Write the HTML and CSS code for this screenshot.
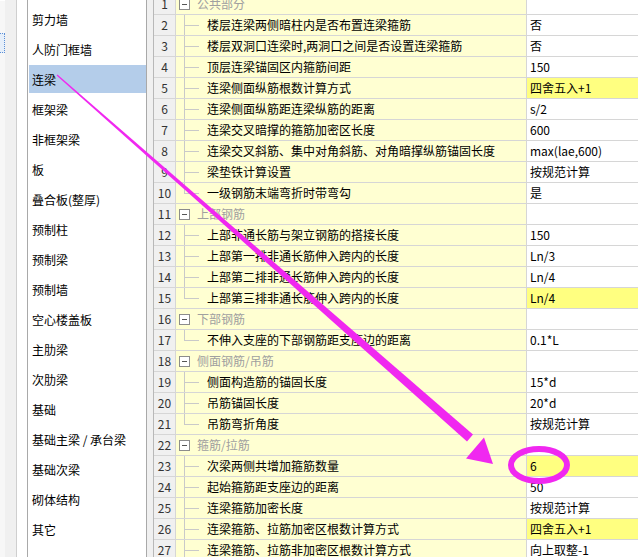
FILE: index.html
```html
<!DOCTYPE html>
<html lang="zh-CN">
<head>
<meta charset="utf-8">
<title>连梁</title>
<link rel="stylesheet" href="styles.css">
</head>
<body>
<div class="app">
  <div class="edge"><div class="edge-sel"></div></div>
  <div class="rail"></div>
  <div class="pad"></div>
  <nav class="sidebar">
    <div class="item">剪力墙</div>
    <div class="item">人防门框墙</div>
    <div class="item sel">连梁</div>
    <div class="item">框架梁</div>
    <div class="item">非框架梁</div>
    <div class="item">板</div>
    <div class="item">叠合板(整厚)</div>
    <div class="item">预制柱</div>
    <div class="item">预制梁</div>
    <div class="item">预制墙</div>
    <div class="item">空心楼盖板</div>
    <div class="item">主肋梁</div>
    <div class="item">次肋梁</div>
    <div class="item">基础</div>
    <div class="item">基础主梁 / 承台梁</div>
    <div class="item">基础次梁</div>
    <div class="item">砌体结构</div>
    <div class="item">其它</div>
  </nav>
  <div class="split"></div>
  <div class="grid">
    <div class="row"><div class="num">1</div><div class="name group"><span class="box"></span>公共部分</div><div class="val"></div></div>
    <div class="row"><div class="num">2</div><div class="name child">楼层连梁两侧暗柱内是否布置连梁箍筋</div><div class="val">否</div></div>
    <div class="row"><div class="num">3</div><div class="name child">楼层双洞口连梁时,两洞口之间是否设置连梁箍筋</div><div class="val">否</div></div>
    <div class="row"><div class="num">4</div><div class="name child">顶层连梁锚固区内箍筋间距</div><div class="val">150</div></div>
    <div class="row"><div class="num">5</div><div class="name child">连梁侧面纵筋根数计算方式</div><div class="val hl">四舍五入+1</div></div>
    <div class="row"><div class="num">6</div><div class="name child">连梁侧面纵筋距连梁纵筋的距离</div><div class="val">s/2</div></div>
    <div class="row"><div class="num">7</div><div class="name child">连梁交叉暗撑的箍筋加密区长度</div><div class="val">600</div></div>
    <div class="row"><div class="num">8</div><div class="name child">连梁交叉斜筋、集中对角斜筋、对角暗撑纵筋锚固长度</div><div class="val">max(lae,600)</div></div>
    <div class="row"><div class="num">9</div><div class="name child">梁垫铁计算设置</div><div class="val">按规范计算</div></div>
    <div class="row"><div class="num">10</div><div class="name child last">一级钢筋末端弯折时带弯勾</div><div class="val">是</div></div>
    <div class="row"><div class="num">11</div><div class="name group"><span class="box"></span>上部钢筋</div><div class="val"></div></div>
    <div class="row"><div class="num">12</div><div class="name child">上部非通长筋与架立钢筋的搭接长度</div><div class="val">150</div></div>
    <div class="row"><div class="num">13</div><div class="name child">上部第一排非通长筋伸入跨内的长度</div><div class="val">Ln/3</div></div>
    <div class="row"><div class="num">14</div><div class="name child">上部第二排非通长筋伸入跨内的长度</div><div class="val">Ln/4</div></div>
    <div class="row"><div class="num">15</div><div class="name child last">上部第三排非通长筋伸入跨内的长度</div><div class="val hl">Ln/4</div></div>
    <div class="row"><div class="num">16</div><div class="name group"><span class="box"></span>下部钢筋</div><div class="val"></div></div>
    <div class="row"><div class="num">17</div><div class="name child last">不伸入支座的下部钢筋距支座边的距离</div><div class="val">0.1*L</div></div>
    <div class="row"><div class="num">18</div><div class="name group"><span class="box"></span>侧面钢筋/吊筋</div><div class="val"></div></div>
    <div class="row"><div class="num">19</div><div class="name child">侧面构造筋的锚固长度</div><div class="val">15*d</div></div>
    <div class="row"><div class="num">20</div><div class="name child">吊筋锚固长度</div><div class="val">20*d</div></div>
    <div class="row"><div class="num">21</div><div class="name child last">吊筋弯折角度</div><div class="val">按规范计算</div></div>
    <div class="row"><div class="num">22</div><div class="name group"><span class="box"></span>箍筋/拉筋</div><div class="val"></div></div>
    <div class="row"><div class="num">23</div><div class="name child">次梁两侧共增加箍筋数量</div><div class="val hl">6</div></div>
    <div class="row"><div class="num">24</div><div class="name child">起始箍筋距支座边的距离</div><div class="val">50</div></div>
    <div class="row"><div class="num">25</div><div class="name child">连梁箍筋加密长度</div><div class="val">按规范计算</div></div>
    <div class="row"><div class="num">26</div><div class="name child">连梁箍筋、拉筋加密区根数计算方式</div><div class="val hl">四舍五入+1</div></div>
    <div class="row"><div class="num">27</div><div class="name child">连梁箍筋、拉筋非加密区根数计算方式</div><div class="val">向上取整-1</div></div>
  </div>
</div>
<svg class="overlay" width="638" height="557" viewBox="0 0 638 557">
  <polygon class="mark" points="56.6,75.4 57.4,74.6 473,434.6 467,441.4"/>
  <polygon class="mark" points="493,464 466,458.5 484,437.5"/>
  <ellipse class="ring" cx="539" cy="465" rx="28" ry="16"/>
</svg>
</body>
</html>
```

FILE: styles.css
```css
* { box-sizing: border-box; }
body {
  margin: 0;
  width: 638px;
  height: 557px;
  overflow: hidden;
  position: relative;
  background: #fff;
  font-family: "Noto Sans CJK SC", "Microsoft YaHei", sans-serif;
  font-size: 12px;
  color: #000;
}
.app {
  display: flex;
  height: 557px;
}
.edge {
  width: 5px;
  background: #f7f7f7;
  border-top: 1px solid #fff;
  padding-top: 32px;
}
.edge-sel {
  height: 20px;
  border: 1px dotted #5b8fd6;
  border-left: none;
  background: #e6effa;
}
.rail {
  width: 12px;
  background: #f0f0f0;
  border-right: 1px solid #cfcfcf;
}
.pad {
  width: 10px;
  background: #fff;
}
.sidebar {
  width: 120px;
  border-left: 1px solid #a9a9a9;
  border-right: 1px solid #a9a9a9;
  padding-top: 5px;
  background: #fff;
}
.item {
  height: 30px;
  line-height: 30px;
  padding-left: 3px;
  margin-left: 1px;
  white-space: nowrap;
}
.item.sel {
  background: linear-gradient(#b4cdea, #b4cdea) no-repeat 0 0 / 100% 28px;
}
.split {
  width: 7px;
  background: #f0f0f0;
  border-right: 1px solid #b8b8b8;
}
.grid {
  flex: 1;
  margin-top: -6px;
}
.row {
  display: grid;
  grid-template-columns: 22px 351px 1fr;
  height: 21px;
  border-bottom: 1px solid #d6d6d6;
}
.num {
  background: #f0f0f0;
  border-right: 1px solid #d6d6d6;
  text-align: center;
  line-height: 20px;
  color: #333;
  font-size: 12px;
}
.name {
  position: relative;
  background: #ffffd2;
  border-right: 1px solid #d6d6d6;
  line-height: 20px;
  white-space: nowrap;
  overflow: hidden;
}
.name.child { padding-left: 31px; }
.name.child::before {
  content: "";
  position: absolute;
  left: 8px;
  top: 0;
  height: 20px;
  border-left: 1px solid #c9c9c9;
}
.name.child::after {
  content: "";
  position: absolute;
  left: 8px;
  top: 10px;
  width: 15px;
  border-top: 1px solid #c9c9c9;
}
.name.last::before { height: 11px; }
.name.group {
  padding-left: 21px;
  color: #a0a0a0;
}
.box {
  position: absolute;
  left: 3px;
  top: 5px;
  width: 11px;
  height: 11px;
  border: 1px solid #8c8c8c;
  background: #fff;
}
.box::after {
  content: "";
  position: absolute;
  left: 2px;
  top: 4px;
  width: 5px;
  height: 1px;
  background: #555;
}
.val {
  padding-left: 3px;
  line-height: 20px;
  white-space: nowrap;
  background: #fff;
}
.val.hl { background: #ffff80; }
.overlay {
  position: absolute;
  left: 0;
  top: 0;
  pointer-events: none;
}
.mark { fill: #f028f0; }
.ring {
  fill: none;
  stroke: #f028f0;
  stroke-width: 6;
}
```
